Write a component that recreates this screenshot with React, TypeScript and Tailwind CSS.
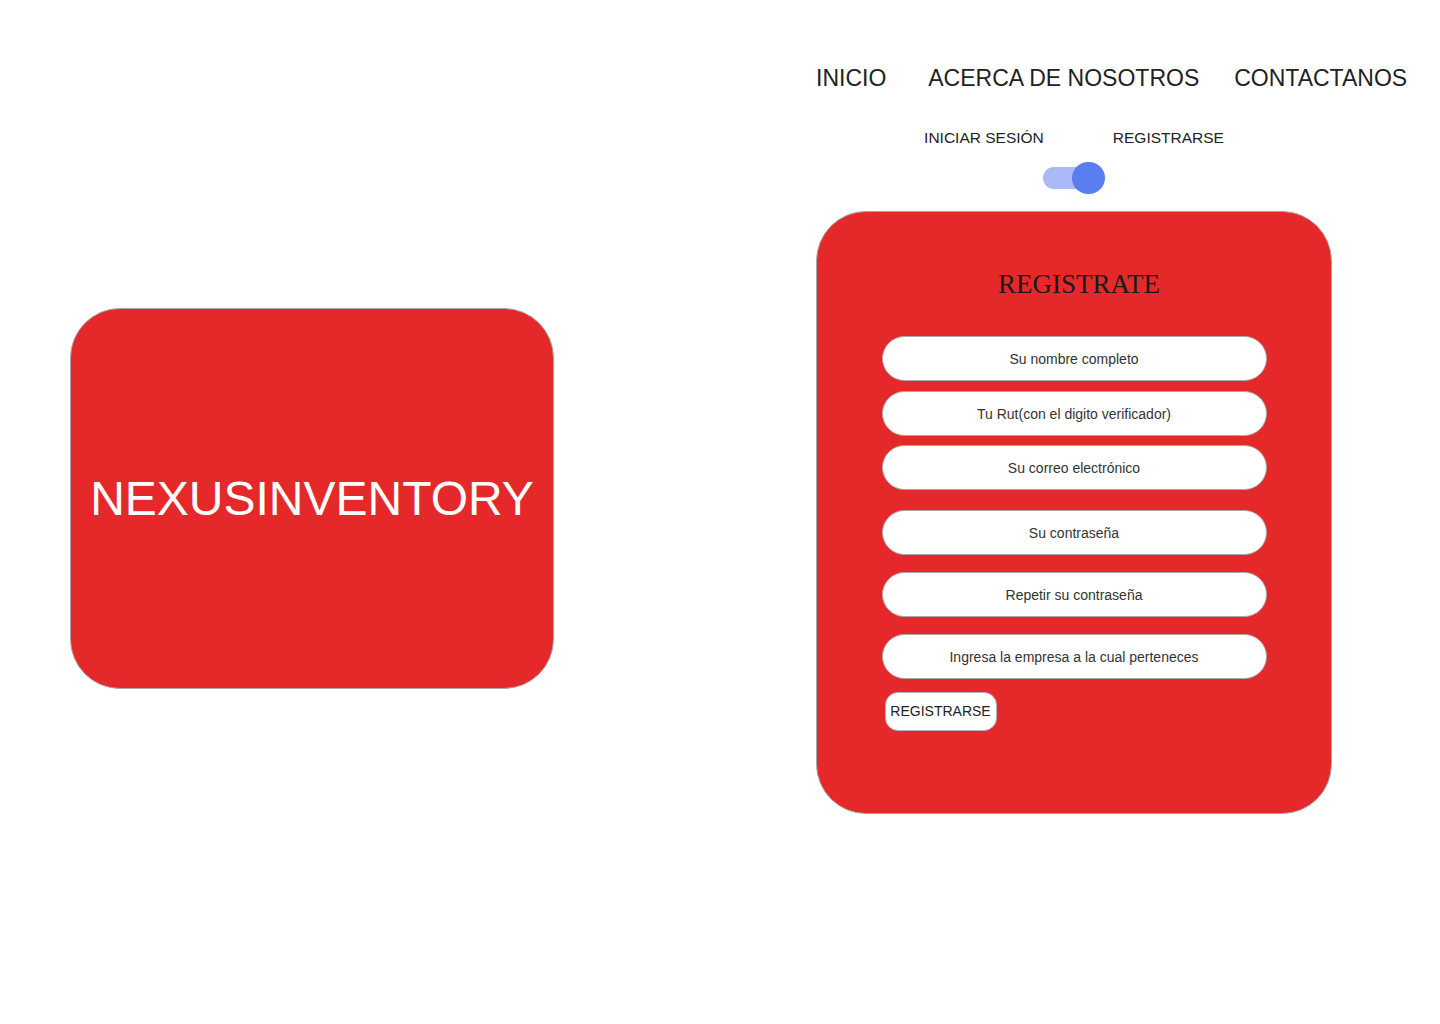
import { useState } from "react";

const FIELDS = [
  { placeholder: "Su nombre completo", type: "text", mt: "mt-0" },
  { placeholder: "Tu Rut(con el digito verificador)", type: "text", mt: "mt-[10px]" },
  { placeholder: "Su correo electrónico", type: "email", mt: "mt-[9px]" },
  { placeholder: "Su contraseña", type: "password", mt: "mt-[20px]" },
  { placeholder: "Repetir su contraseña", type: "password", mt: "mt-[17px]" },
  { placeholder: "Ingresa la empresa a la cual perteneces", type: "text", mt: "mt-[17px]" },
];

function Toggle({ on, onChange }: { on: boolean; onChange: (v: boolean) => void }) {
  return (
    <button
      type="button"
      onClick={() => onChange(!on)}
      className="relative h-[32px] w-[62px]"
      aria-label="Cambiar formulario"
    >
      <span className="absolute left-0 top-[5px] h-[22px] w-[50px] rounded-full bg-[#abb9f6]" />
      <span
        className={
          on
            ? "absolute right-0 top-0 h-[32px] w-[33px] rounded-full bg-[#5b7df2]"
            : "absolute left-0 top-0 h-[32px] w-[33px] rounded-full bg-[#5b7df2]"
        }
      />
    </button>
  );
}

export default function App() {
  const [register, setRegister] = useState(true);

  return (
    <div className="grid min-h-[1024px] grid-cols-[816px_1fr] bg-white font-['Liberation_Sans',Arial,sans-serif] text-[#222]">
      {/* brand card */}
      <section className="pl-[70px] pt-[308px]">
        <div className="flex h-[381px] w-[484px] items-center justify-center rounded-[50px] border border-[#a9a9a9] bg-[#e5292a]">
          <h1 className="text-[48px] leading-none text-white">NEXUSINVENTORY</h1>
        </div>
      </section>

      <section className="pt-[64px]">
        <nav className="flex text-[23px] leading-[28px]">
          <a href="#">INICIO</a>
          <a href="#" className="ml-[42px]">ACERCA DE NOSOTROS</a>
          <a href="#" className="ml-[35px]">CONTACTANOS</a>
        </nav>

        <div className="w-[516px]">
          <div className="mt-[36px] flex justify-center gap-[69px] text-[15.5px] leading-[20px]">
            <span>INICIAR SESIÓN</span>
            <span>REGISTRARSE</span>
          </div>

          <div className="mt-[14px] flex justify-center">
            <Toggle on={register} onChange={setRegister} />
          </div>

          <form
            onSubmit={(e) => e.preventDefault()}
            className="mt-[17px] flex h-[603px] flex-col items-center rounded-[50px] border border-[#a9a9a9] bg-[#e5292a] pt-[59px]"
          >
            <h2 className="mb-[38px] pl-[10px] font-['Liberation_Serif','Times_New_Roman',serif] text-[27px] leading-none text-[#1a1a1a]">
              REGISTRATE
            </h2>

            {FIELDS.map((f) => (
              <input
                key={f.placeholder}
                type={f.type}
                placeholder={f.placeholder}
                className={`${f.mt} h-[45px] w-[385px] rounded-full border border-[#a9a9a9] bg-white px-4 text-center text-[14px] text-[#333] placeholder:text-[#333] focus:outline-none`}
              />
            ))}

            <div className="mt-[13px] w-[385px]">
              <button
                type="submit"
                className="ml-[3px] h-[39px] w-[112px] rounded-[13px] border border-[#b5b5b5] bg-white text-[14px] text-[#222]"
              >
                REGISTRARSE
              </button>
            </div>
          </form>
        </div>
      </section>
    </div>
  );
}
